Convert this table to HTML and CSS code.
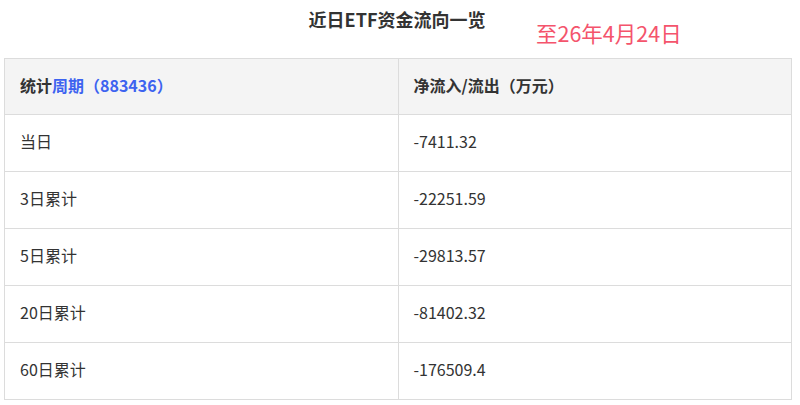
FILE: index.html
```html
<!DOCTYPE html>
<html lang="zh">
<head>
<meta charset="utf-8">
<link rel="stylesheet" href="styles.css">
</head>
<body>
<div class="page">
  <div class="head">
    <h1 class="title">近日ETF资金流向一览</h1>
    <div class="date">至26年4月24日</div>
  </div>
  <table class="flow">
    <thead>
      <tr><th>统计<span class="blue">周期（883436）</span></th><th>净流入/流出（万元）</th></tr>
    </thead>
    <tbody>
      <tr><td>当日</td><td>-7411.32</td></tr>
      <tr><td>3日累计</td><td>-22251.59</td></tr>
      <tr><td>5日累计</td><td>-29813.57</td></tr>
      <tr><td>20日累计</td><td>-81402.32</td></tr>
      <tr><td>60日累计</td><td>-176509.4</td></tr>
    </tbody>
  </table>
</div>
</body>
</html>
```
FILE: styles.css
```css
* { box-sizing: border-box; }
html, body { margin: 0; padding: 0; background: #fff; }
body {
  font-family: "Noto Sans CJK SC", "Noto Sans", sans-serif;
  color: #333;
}
.page { padding: 0 8px 0 4px; }
.head {
  position: relative;
  height: 58px;
}
.title {
  margin: 0;
  padding-top: 7px;
  text-align: center;
  font-size: 18px;
  line-height: 24px;
  font-weight: 700;
  color: #333;
  padding-right: 2px;
}
.date {
  position: absolute;
  left: 532px;
  top: 19px;
  font-size: 21.5px;
  line-height: 28px;
  color: #f4546c;
  font-weight: 400;
}
.flow {
  width: 788px;
  border-collapse: collapse;
  font-size: 16px;
}
.flow th, .flow td {
  border: 1px solid #dcdcdc;
  text-align: left;
  padding: 0 0 4px 15px;
  width: 50%;
  line-height: 20px;
}
.flow th {
  background: #f4f4f4;
  height: 56px;
  font-weight: 700;
  color: #333;
}
.flow td {
  height: 57px;
  font-weight: 400;
}
.blue { color: #3d63f0; }
```
